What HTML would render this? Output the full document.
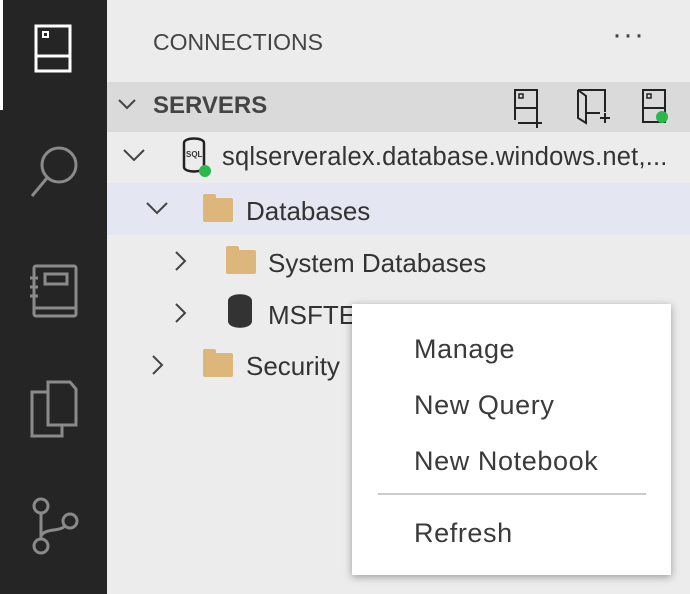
<!DOCTYPE html>
<html><head><style>
body{margin:0;width:690px;height:594px;overflow:hidden;background:#ececec;font-family:"Liberation Sans",sans-serif;position:relative}
.side{position:absolute;left:0;top:0;width:107px;height:594px;background:#252526}
.ab{position:absolute;left:0;top:0;width:3px;height:110px;background:#fff}
.t{position:absolute;color:#333;font-size:25px;white-space:nowrap}
.row{position:absolute;left:107px;width:583px}
.fold{position:absolute;width:30px;height:24px;background:#dcb67a;border-radius:2px}
.fold:before{content:"";position:absolute;left:0;top:-4px;width:13px;height:6px;background:#dcb67a;border-radius:2px 2px 0 0}
.menu{position:absolute;left:352px;top:304px;width:319px;height:271px;background:#fff;box-shadow:0 2px 8px rgba(0,0,0,.35)}
.mi{position:absolute;left:62px;font-size:27px;letter-spacing:0.6px;color:#3a3a3a}
</style></head><body>
<div class="side"><div class="ab"></div>
<svg width="107" height="594" style="position:absolute;left:0;top:0" fill="none">
<g stroke="#fff" stroke-width="3"><rect x="36" y="26" width="34" height="45"/><line x1="36" y1="56" x2="70" y2="56"/><rect x="43" y="32" width="5" height="5" stroke-width="2"/></g>
<g stroke="#8a8a8a" stroke-width="3"><circle cx="59" cy="165" r="17"/><line x1="47" y1="178" x2="32" y2="196"/>
<rect x="34" y="266" width="42" height="50" rx="2"/><line x1="34" y1="308" x2="76" y2="308"/><rect x="45" y="274" width="22" height="10"/>
<path d="M30 278h8M30 287h8M30 296h8"/>
<path d="M48 382h22l6 7v36H48z"/><path d="M48 392H32v44h30v-11"/>
<circle cx="41" cy="506" r="7"/><circle cx="41" cy="546" r="7"/><circle cx="70" cy="521" r="7"/><path d="M41 513v26M41 536c4-8 18-4 24-10"/></g>
</svg></div>
<div class="t" style="left:153px;top:29px;font-size:23px;color:#444">CONNECTIONS</div>
<div class="t" style="left:612px;top:18px;font-size:30px;letter-spacing:1px;color:#444">···</div>
<div class="row" style="top:82px;height:50px;background:#dadada"></div>
<div class="row" style="top:132px;height:51px;background:#ececec"></div>
<div class="row" style="top:183px;height:52px;background:#e4e6f1"></div>
<svg width="690" height="594" style="position:absolute;left:0;top:0" fill="none" stroke="#444" stroke-width="2">
<path d="M119 100l8 8 8-8"/><path d="M124 150l10 10 10-10"/><path d="M147 203l10 10 10-10"/>
<path d="M176 252l9 9-9 9"/><path d="M176 304l9 9-9 9"/><path d="M153 356l9 9-9 9"/>
<g stroke="#222"><path d="M515 120V90h22v28M515 108h22M518 123h14"/><path d="M537 118v10M532 123h10"/><rect x="519" y="94" width="4" height="4" stroke-width="1.5"/>
<path d="M578 90h27v22M578 90v28l8 5V96l-8-6M586 113h14M605 113v10M600 118h10"/>
<path d="M643 90h22v32h-22zM643 108h22"/><rect x="647" y="94" width="4" height="4" stroke-width="1.5"/>
<path d="M184 143c0-6 20-6 20 0v24c0 6-20 6-20 0z" stroke-width="2.5"/></g>
<circle cx="662" cy="117" r="6" fill="#2db84d" stroke="none"/>
<circle cx="205" cy="171" r="6" fill="#2db84d" stroke="none"/>
<path d="M228 301c0-9 24-9 24 0v20c0 9-24 9-24 0z" fill="#333" stroke="none"/>
</svg>
<div class="t" style="left:186px;top:150px;font-size:8px;font-weight:bold">SQL</div>
<div class="t" style="left:153px;top:92px;font-weight:bold;font-size:24px;color:#444">SERVERS</div>
<div class="t" style="left:222px;top:143px;font-size:25.5px;letter-spacing:0.2px">sqlserveralex.database.windows.net,...</div>
<div class="fold" style="left:203px;top:198px"></div>
<div class="t" style="left:246px;top:196px;font-size:26px">Databases</div>
<div class="fold" style="left:226px;top:250px"></div>
<div class="t" style="left:268px;top:248px;font-size:26px">System Databases</div>
<div class="t" style="left:268px;top:300px;font-size:26px">MSFTEm</div>
<div class="fold" style="left:203px;top:353px"></div>
<div class="t" style="left:246px;top:351px;font-size:26px">Security</div>
<div class="menu">
<div class="mi" style="top:30px">Manage</div>
<div class="mi" style="top:86px">New Query</div>
<div class="mi" style="top:142px">New Notebook</div>
<div style="position:absolute;left:26px;top:189px;width:268px;height:2px;background:#ccc"></div>
<div class="mi" style="top:214px">Refresh</div>
</div>
</body></html>
